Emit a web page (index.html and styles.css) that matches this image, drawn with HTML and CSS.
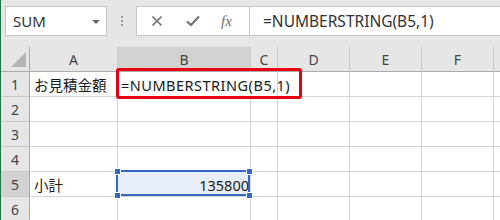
FILE: index.html
```html
<!DOCTYPE html>
<html lang="ja">
<head>
    <meta charset="UTF-8">
    <title>NUMBERSTRING</title>
    <link rel="stylesheet" href="styles.css">
</head>
<body>
    <div class="window">
        <div class="toolbar">
            <div class="namebox">
                <span class="name">SUM</span>
                <span class="caret"></span>
            </div>
            <div class="grip"><i></i><i></i><i></i></div>
            <div class="fxbox">
                <svg class="btn" width="12" height="12" viewBox="0 0 12 12">
                    <path d="M1.5 1.5 L10.5 10.5 M10.5 1.5 L1.5 10.5" stroke="#707070" stroke-width="1.6" fill="none"/>
                </svg>
                <svg class="btn" width="14" height="12" viewBox="0 0 14 12">
                    <path d="M1 6.5 L5 10 L13 1.5" stroke="#707070" stroke-width="2.2" fill="none"/>
                </svg>
                <span class="fx">fx</span>
            </div>
            <div class="formula">=NUMBERSTRING(B5,1)</div>
        </div>

        <div class="sheet">
            <div class="hd corner"><span class="tri"></span></div>
            <div class="hd col">A</div>
            <div class="hd col on">B</div>
            <div class="hd col">C</div>
            <div class="hd col">D</div>
            <div class="hd col">E</div>
            <div class="hd col">F</div>
            <div class="hd col last"></div>

            <div class="hd row">1</div>
            <div class="cell">お見積金額</div>
            <div class="cell spill">=NUMBERSTRING(B5,1)</div>
            <div class="cell"></div><div class="cell"></div><div class="cell"></div><div class="cell"></div><div class="cell"></div>

            <div class="hd row">2</div>
            <div class="cell"></div><div class="cell"></div><div class="cell"></div><div class="cell"></div><div class="cell"></div><div class="cell"></div><div class="cell"></div>

            <div class="hd row">3</div>
            <div class="cell"></div><div class="cell"></div><div class="cell"></div><div class="cell"></div><div class="cell"></div><div class="cell"></div><div class="cell"></div>

            <div class="hd row">4</div>
            <div class="cell"></div><div class="cell"></div><div class="cell"></div><div class="cell"></div><div class="cell"></div><div class="cell"></div><div class="cell"></div>

            <div class="hd row on">5</div>
            <div class="cell">小計</div>
            <div class="cell num active">135800
                <div class="selection">
                    <span class="handle tl"></span>
                    <span class="handle tr"></span>
                    <span class="handle bl"></span>
                    <span class="handle br"></span>
                </div>
            </div>
            <div class="cell"></div><div class="cell"></div><div class="cell"></div><div class="cell"></div><div class="cell"></div>

            <div class="hd row">6</div>
            <div class="cell"></div><div class="cell"></div><div class="cell"></div><div class="cell"></div><div class="cell"></div><div class="cell"></div><div class="cell"></div>
        </div>

        <div class="callout"></div>
    </div>
</body>
</html>
```

FILE: styles.css
```css
body {
    margin: 0;
    font-family: "Noto Sans", "Noto Sans CJK JP", sans-serif;
    color: #222;
}
.window {
    position: relative;
    width: 500px;
    height: 220px;
    overflow: hidden;
    background-color: #e6e6e6;
    border-left: 1px solid #217346;
    box-sizing: border-box;
}
.toolbar {
    display: flex;
    align-items: flex-start;
    height: 47px;
    padding: 6px 0 0 4px;
    box-sizing: border-box;
}
.namebox {
    display: flex;
    align-items: center;
    justify-content: space-between;
    width: 102px;
    height: 30px;
    padding: 0 6px 0 7px;
    box-sizing: border-box;
    background-color: #fff;
    border: 1px solid #c6c6c6;
}
.name {
    font-size: 15px;
    color: #333;
}
.caret {
    width: 0;
    height: 0;
    margin-top: 1px;
    border-left: 4px solid transparent;
    border-right: 4px solid transparent;
    border-top: 4px solid #6a6a6a;
}
.grip {
    display: flex;
    flex-direction: column;
    gap: 2px;
    margin: 10px 13px 0 14px;
}
.grip i {
    display: block;
    width: 2px;
    height: 2px;
    background-color: #9a9a9a;
}
.fxbox {
    display: flex;
    align-items: center;
    width: 113px;
    height: 30px;
    padding-left: 14px;
    gap: 23px;
    box-sizing: border-box;
    background-color: #fff;
    border: 1px solid #c6c6c6;
    border-right: none;
}
.fx {
    font-family: "Liberation Serif", serif;
    font-style: italic;
    font-size: 15px;
    color: #707070;
    margin-left: -2px;
}
.formula {
    flex: 1;
    height: 30px;
    line-height: 28px;
    padding-left: 13px;
    box-sizing: border-box;
    white-space: nowrap;
    font-size: 15.5px;
    color: #333;
    background-color: #fff;
    border: 1px solid #c6c6c6;
    border-right: none;
}
.sheet {
    display: grid;
    grid-template-columns: 29px 88px 133px 27px 72px 72px 72px 1fr;
    grid-auto-rows: 25px;
    background-color: #fff;
}
.hd {
    display: flex;
    align-items: center;
    justify-content: center;
    box-sizing: border-box;
    background-color: #e6e6e6;
    border-right: 1px solid #c8c8c8;
    border-bottom: 1px solid #c8c8c8;
    font-size: 14px;
    color: #444;
}
.hd.col {
    border-bottom-color: #ababab;
}
.hd.row {
    border-right-color: #ababab;
}
.hd.on {
    background-color: #d2d2d2;
}
.corner {
    position: relative;
    border-right-color: #ababab;
    border-bottom-color: #ababab;
}
.tri {
    position: absolute;
    right: 3px;
    bottom: 4px;
    width: 0;
    height: 0;
    border-left: 15px solid transparent;
    border-bottom: 15px solid #b5b5b5;
}
.cell {
    display: flex;
    align-items: center;
    padding: 1px 3px 0 4px;
    box-sizing: border-box;
    border-right: 1px solid #d4d4d4;
    border-bottom: 1px solid #d4d4d4;
    white-space: nowrap;
    font-size: 14.5px;
    color: #1a1a1a;
}
.cell.spill {
    padding-left: 3px;
    border-right-color: transparent;
    letter-spacing: 0.5px;
}
.cell.num {
    justify-content: flex-end;
    padding-right: 1px;
}
.cell.active {
    position: relative;
    background-color: #e8eef8;
}
.selection {
    position: absolute;
    top: -2px;
    left: -2px;
    right: 0;
    bottom: 0;
    border: 2px solid #3568c4;
}
.handle {
    position: absolute;
    width: 5px;
    height: 5px;
    background-color: #3568c4;
    border: 1px solid #fff;
}
.handle.tl { top: -4px; left: -4px; }
.handle.tr { top: -4px; right: -5px; }
.handle.bl { bottom: -5px; left: -4px; }
.handle.br { bottom: -5px; right: -5px; }
.callout {
    position: absolute;
    left: 115px;
    top: 68px;
    width: 186px;
    height: 31px;
    box-sizing: border-box;
    border: 3px solid #e60012;
    border-radius: 3px;
}
```
